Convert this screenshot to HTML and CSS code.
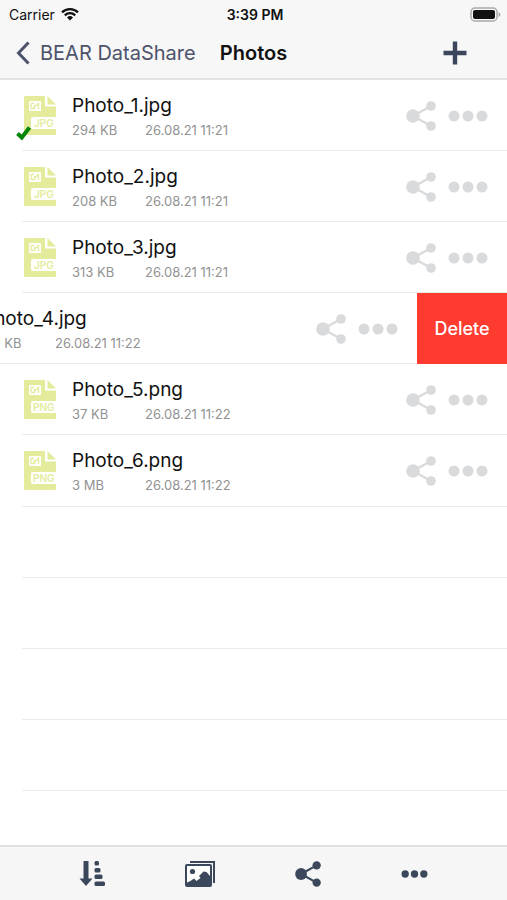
FILE: index.html
```
<!DOCTYPE html>
<html lang="en">
<head>
<meta charset="utf-8">
<meta name="viewport" content="width=device-width, initial-scale=1">
<title>Photos</title>
<link rel="stylesheet" href="styles.css">
</head>
<body>
<svg class="defs" width="0" height="0" aria-hidden="true">
  <symbol id="share" viewBox="0 0 30 30">
    <path d="M7 15 25 5M7 15l18 10" fill="none" stroke="currentColor" stroke-width="2.4"/>
    <circle cx="7" cy="15" r="6.8"/><circle cx="25" cy="5" r="4.8"/><circle cx="25" cy="25" r="4.8"/>
  </symbol>
  <symbol id="dots" viewBox="0 0 40 12">
    <circle cx="6" cy="6" r="5.5"/><circle cx="20" cy="6" r="5.5"/><circle cx="34" cy="6" r="5.5"/>
  </symbol>
  <symbol id="file" viewBox="0 0 32 40">
    <path d="M1 0H21V10.500H32V21H9q-2 0-2 2v8q0 2 2 2H32v5.500q0 .5-1 .5H1q-1 0-1-1V1q0-1 1-1Z"/>
    <path d="M23.500 0 32 8.500H23.500Z"/>
    <path d="M6 5h10q1 0 1 1v9H6q-1 0-1-1V6q0-1 1-1Z" fill="#fff"/>
    <path d="M7 7.500v5M7 7.500h3M7 12.500h3.500V9M10.500 11l4-3.500V13" fill="none" stroke="currentColor" stroke-width="1.300"/>
  </symbol>
</svg>
<header class="top">
  <div class="status">
    <span class="carrier">Carrier
      <svg width="18" height="14" viewBox="0 0 18 14" aria-hidden="true"><path d="M1 5.300a11.500 11.500 0 0 1 16 0M3.800 8.300a7.500 7.500 0 0 1 10.400 0" fill="none" stroke="#111" stroke-width="2.300"/><path d="M9 13.500 6 10.500a4.300 4.300 0 0 1 6 0Z" fill="#111"/></svg>
    </span>
    <time class="clock">3:39 PM</time>
    <svg class="battery" width="31" height="15" viewBox="0 0 31 15" aria-hidden="true"><rect x="1" y="1" width="26" height="13" rx="4" fill="#f7f7f7" stroke="#aaa" stroke-width="1.500"/><rect x="3" y="3" width="22" height="9" rx="2"/><path d="M28.500 5q2 1 2 2.500t-2 2.500Z" fill="#aaa"/></svg>
  </div>
  <nav class="nav">
    <a class="back" href="#">
      <svg width="16" height="24" viewBox="0 0 16 24" aria-hidden="true"><path d="M14.500 1.500 4.500 12l10 10.500" fill="none" stroke="currentColor" stroke-width="3"/></svg>
      BEAR DataShare</a>
    <h1>Photos</h1>
    <button class="add" aria-label="Add"><svg width="24" height="24" viewBox="0 0 24 24"><path d="M12 .5v23M.5 12h23" stroke="currentColor" stroke-width="4.400"/></svg></button>
  </nav>
</header>
<main>
  <ul class="list">
    <li class="row"><div class="item">
      <div class="thumb"><svg class="file" viewBox="0 0 32 40"><use href="#file"/><text x="10" y="31">JPG</text></svg><svg class="check" viewBox="0 0 16 16"><path d="m1.500 8.500 4.300 4L13.500 2.500" fill="none" stroke="#078507" stroke-width="4"/></svg></div>
      <div class="info"><h2>Photo_1.jpg</h2><p><span class="size">294 KB</span><time>26.08.21 11:21</time></p></div>
      <button aria-label="Share"><svg class="share"><use href="#share"/></svg></button><button aria-label="More"><svg class="dots"><use href="#dots"/></svg></button>
    </div></li>
    <li class="row"><div class="item">
      <div class="thumb"><svg class="file" viewBox="0 0 32 40"><use href="#file"/><text x="10" y="31">JPG</text></svg></div>
      <div class="info"><h2>Photo_2.jpg</h2><p><span class="size">208 KB</span><time>26.08.21 11:21</time></p></div>
      <button aria-label="Share"><svg class="share"><use href="#share"/></svg></button><button aria-label="More"><svg class="dots"><use href="#dots"/></svg></button>
    </div></li>
    <li class="row"><div class="item">
      <div class="thumb"><svg class="file" viewBox="0 0 32 40"><use href="#file"/><text x="10" y="31">JPG</text></svg></div>
      <div class="info"><h2>Photo_3.jpg</h2><p><span class="size">313 KB</span><time>26.08.21 11:21</time></p></div>
      <button aria-label="Share"><svg class="share"><use href="#share"/></svg></button><button aria-label="More"><svg class="dots"><use href="#dots"/></svg></button>
    </div></li>
    <li class="row swiped"><div class="item">
      <div class="thumb"><svg class="file" viewBox="0 0 32 40"><use href="#file"/><text x="10" y="31">JPG</text></svg></div>
      <div class="info"><h2>Photo_4.jpg</h2><p><span class="size">119 KB</span><time>26.08.21 11:22</time></p></div>
      <button aria-label="Share"><svg class="share"><use href="#share"/></svg></button><button aria-label="More"><svg class="dots"><use href="#dots"/></svg></button>
    </div><button class="delete">Delete</button></li>
    <li class="row"><div class="item">
      <div class="thumb"><svg class="file" viewBox="0 0 32 40"><use href="#file"/><text x="9" y="31">PNG</text></svg></div>
      <div class="info"><h2>Photo_5.png</h2><p><span class="size">37 KB</span><time>26.08.21 11:22</time></p></div>
      <button aria-label="Share"><svg class="share"><use href="#share"/></svg></button><button aria-label="More"><svg class="dots"><use href="#dots"/></svg></button>
    </div></li>
    <li class="row"><div class="item">
      <div class="thumb"><svg class="file" viewBox="0 0 32 40"><use href="#file"/><text x="9" y="31">PNG</text></svg></div>
      <div class="info"><h2>Photo_6.png</h2><p><span class="size">3 MB</span><time>26.08.21 11:22</time></p></div>
      <button aria-label="Share"><svg class="share"><use href="#share"/></svg></button><button aria-label="More"><svg class="dots"><use href="#dots"/></svg></button>
    </div></li>
    <li class="row"></li>
    <li class="row"></li>
    <li class="row"></li>
    <li class="row"></li>
  </ul>
</main>
<footer class="toolbar">
  <button aria-label="Sort"><svg width="26" height="26" viewBox="0 0 26 26"><path d="M4.500 0h5v17.500h4L7 25 .5 17.500h4Z"/><rect x="15.500" y="0" width="4.500" height="4.500" rx="1.500"/><rect x="15.500" y="7" width="6" height="4.500" rx="1.500"/><rect x="15.500" y="13.500" width="8" height="4.500" rx="1.500"/><rect x="15.500" y="20.500" width="10.500" height="4.500" rx="1.500"/></svg></button>
  <button aria-label="Gallery"><svg width="30" height="26" viewBox="0 0 30 26"><path d="M5 1h24v21" fill="none" stroke="currentColor" stroke-width="2"/><rect x="1" y="4" width="25" height="21" rx="1" fill="#fff" stroke="currentColor" stroke-width="2"/><circle cx="7.500" cy="10.500" r="2.600"/><path d="M2 21.500 5.500 20 9 17.500l2.500 2.500 4-3-1.500-2 4.500-4.500 3 .5L25 15v9H2Z"/></svg></button>
  <button aria-label="Share"><svg width="26" height="26"><use href="#share"/></svg></button>
  <button aria-label="More"><svg width="27" height="8"><use href="#dots"/></svg></button>
</footer>
</body>
</html>
```
FILE: styles.css
```
* { box-sizing: border-box; margin: 0; padding: 0; }

body {
  display: flex;
  flex-direction: column;
  min-height: 100vh;
  background: #fff;
  color: #111;
  font-family: Inter, "Liberation Sans", sans-serif;
}

svg { display: block; fill: currentColor; }
.defs { position: absolute; }
button { border: 0; background: none; color: inherit; font: inherit; cursor: pointer; }

.top { background: #f7f7f7; border-bottom: 2px solid #e3e3e3; }

.status, .nav {
  display: grid;
  grid-template-columns: 1fr auto 1fr;
  align-items: center;
}
.status { height: 28px; padding: 0 6px 0 9px; font-size: 14px; }
.carrier { display: flex; align-items: center; gap: 6px; }
.clock { font-weight: 600; }
.battery { justify-self: end; }

.nav { height: 50px; padding: 0 14px; }
.back {
  display: flex;
  align-items: center;
  gap: 10px;
  color: #4c536b;
  font-size: 20px;
  text-decoration: none;
  white-space: nowrap;
}
.nav h1 { font-size: 20px; font-weight: 600; }
.add { justify-self: end; margin-right: 26px; color: #3b465c; }

main { display: flex; flex: 1; }
.list {
  display: flex;
  flex: 1;
  flex-direction: column;
  min-width: 0;
  padding-bottom: 54px;
  overflow: hidden;
  list-style: none;
}
.row {
  display: flex;
  flex: 1 0 71px;
  background: linear-gradient(#ebebeb, #ebebeb) 22px 100% / 100% 1px no-repeat;
}
.swiped { margin-left: -90px; }
.item {
  display: flex;
  flex: 1;
  align-items: center;
  padding: 0 19px 0 24px;
  color: #d9dadc;
}
.thumb { position: relative; width: 32px; margin-right: 16px; color: #e4ec9b; }
.file { width: 32px; height: 40px; }
.file text { font-size: 10px; font-weight: 600; }
.check { position: absolute; bottom: -5px; left: -8px; width: 16px; height: 16px; }
.info { flex: 1; padding-top: 3px; color: #111; }
.info h2 { font-size: 19px; font-weight: 400; line-height: 26px; }
.info p { display: flex; color: #929292; font-size: 13px; line-height: 23px; }
.size { width: 73px; }
.share { width: 30px; height: 30px; }
.dots { width: 40px; height: 12px; margin-left: 12px; }
.delete { width: 90px; background: #ff3b30; color: #fff; font-size: 18px; font-weight: 500; }

.toolbar {
  display: flex;
  align-items: center;
  justify-content: space-around;
  height: 55px;
  padding: 0 39px;
  border-top: 2px solid #e0e0e0;
  background: #f6f6f6;
  color: #3b475b;
}
```
